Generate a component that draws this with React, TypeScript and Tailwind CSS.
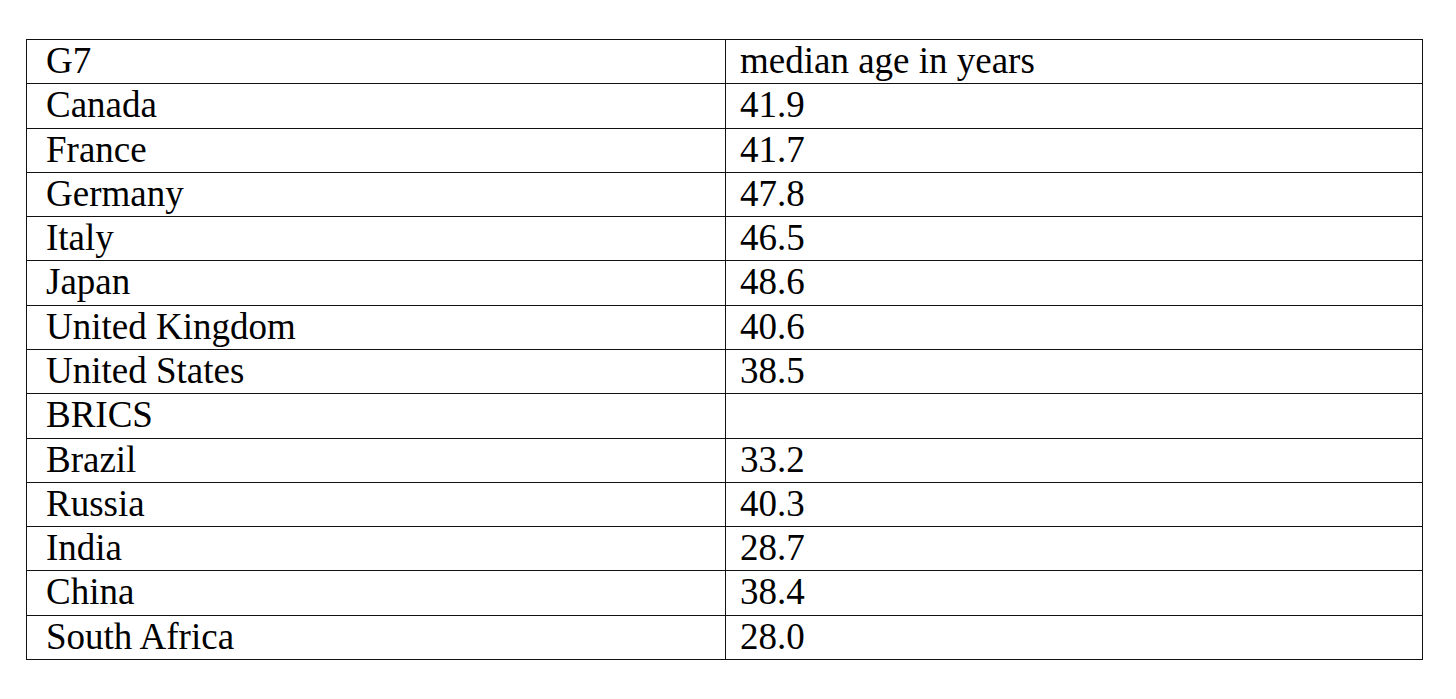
const rows: [string, string][] = [
  ['G7', 'median age in years'],
  ['Canada', '41.9'],
  ['France', '41.7'],
  ['Germany', '47.8'],
  ['Italy', '46.5'],
  ['Japan', '48.6'],
  ['United Kingdom', '40.6'],
  ['United States', '38.5'],
  ['BRICS', ''],
  ['Brazil', '33.2'],
  ['Russia', '40.3'],
  ['India', '28.7'],
  ['China', '38.4'],
  ['South Africa', '28.0'],
];

export default function App() {
  return (
    <div className="w-[1456px] h-[699px] bg-white pt-[39px] pl-[26px]">
      <div
        className="w-[1397px] h-[621px] border border-[#111] flex flex-col text-black text-[37px] leading-none"
        style={{ fontFamily: '"Liberation Serif", "Times New Roman", serif' }}
      >
        {rows.map(([name, age], i) => (
          <div
            key={name}
            className={`flex-1 grid grid-cols-[699px_1fr] ${i > 0 ? 'border-t border-[#111]' : ''}`}
          >
            <div className="pl-[19px] pt-[2px] border-r border-[#111]">{name}</div>
            <div className="pl-[14px] pt-[2px]">{age}</div>
          </div>
        ))}
      </div>
    </div>
  );
}
